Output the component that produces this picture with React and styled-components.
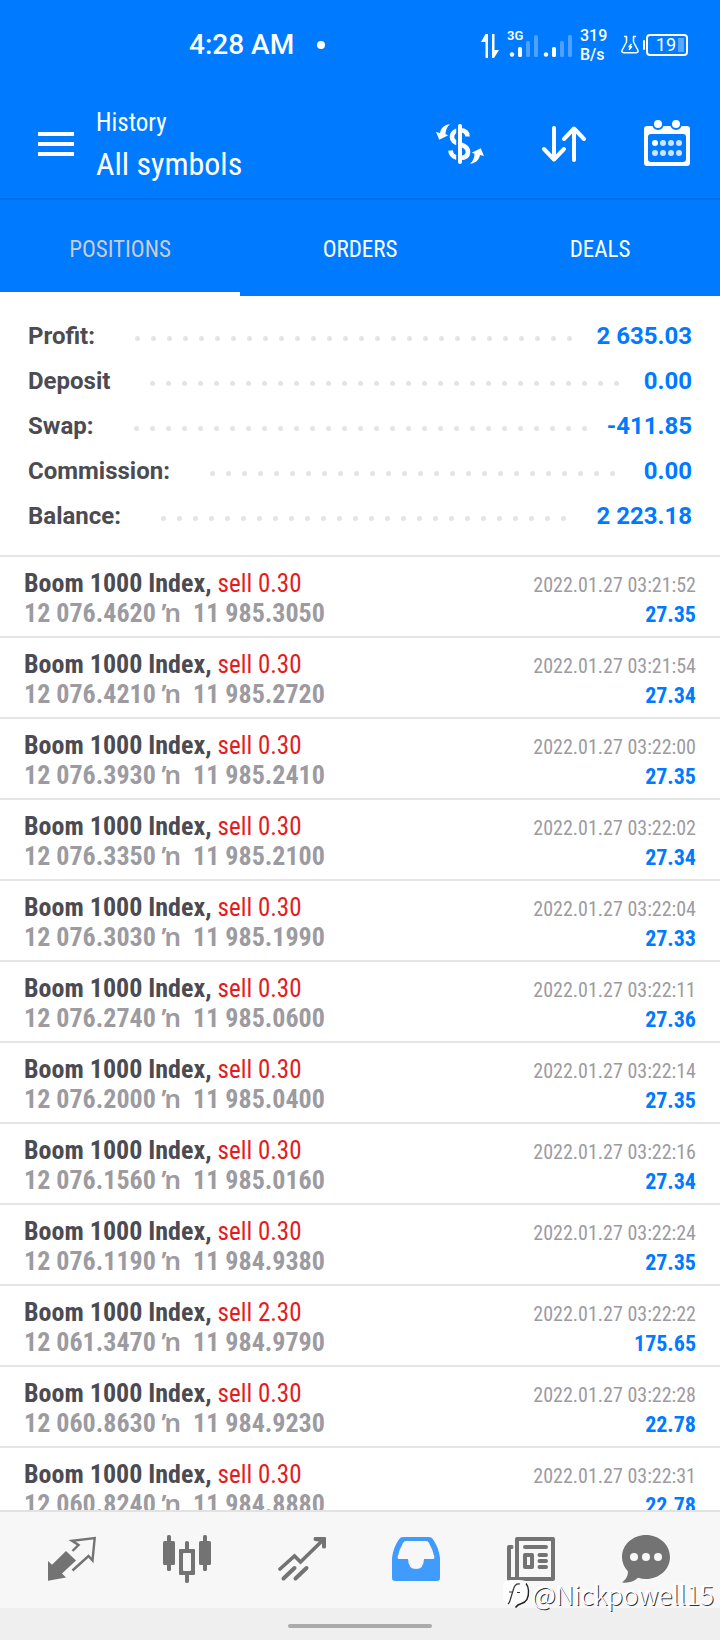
import React from "react";
import styled, { createGlobalStyle } from "styled-components";

const BLUE = "#007aff";
const CONDENSED = '"Roboto Condensed", "Liberation Sans Narrow", Roboto, sans-serif';

const GlobalStyle = createGlobalStyle`
  *, *::before, *::after { box-sizing: border-box; }
  body { margin: 0; background: #fff; font-family: Roboto, sans-serif; }
  button { margin: 0; padding: 0; border: 0; background: none; color: inherit; font: inherit; cursor: pointer; }
  svg { display: block; }
`;

const Screen = styled.div`
  position: relative;
  display: flex;
  flex-direction: column;
  height: 100vh;
  overflow: hidden;
`;

const StatusBar = styled.div`
  display: flex;
  align-items: center;
  justify-content: space-between;
  height: 90px;
  padding: 0 32px 0 189px;
  background: ${BLUE};
  color: #fff;
`;

const Clock = styled.time`
  display: flex;
  align-items: center;
  gap: 23px;
  font-size: 28px;
  font-weight: 500;
  line-height: 32px;

  &::after {
    content: "";
    width: 8px;
    height: 8px;
    border-radius: 50%;
    background: #fff;
  }
`;

const StatusIcons = styled.div`
  display: flex;
  align-items: center;
`;

const NetSpeed = styled.div`
  width: 41px;
  margin-left: 6px;
  font-size: 16px;
  font-weight: 500;
  line-height: 19px;
`;

const Battery = styled.div`
  position: relative;
  display: flex;
  align-items: center;
  justify-content: flex-end;
  gap: 2px;
  width: 42px;
  height: 22px;
  margin-left: 7px;
  padding-right: 2px;
  border: 2px solid #fff;
  border-radius: 4px;
  font-size: 18px;
  line-height: 18px;

  &::before {
    content: "";
    position: absolute;
    left: -5px;
    width: 2px;
    height: 10px;
    border-radius: 2px;
    background: #fff;
  }

  &::after {
    content: "";
    width: 6px;
    height: 14px;
    background: rgba(255, 255, 255, 0.35);
  }
`;

const Header = styled.header`
  display: flex;
  align-items: center;
  height: 110px;
  border-bottom: 2px solid #006ee6;
  background: ${BLUE};
  color: #fff;
  font-family: ${CONDENSED};
`;

const MenuButton = styled.button`
  display: flex;
  align-items: center;
  width: 96px;
  height: 96px;
  padding-left: 38px;
`;

const Titles = styled.div`
  flex: 1;
`;

const Kicker = styled.div`
  font-size: 25px;
  line-height: 40px;
`;

const Title = styled.h1`
  margin: 0;
  font-size: 32px;
  font-weight: 400;
  line-height: 42px;
`;

const ToolButton = styled.button`
  display: flex;
  align-items: center;
  justify-content: center;
  width: 104px;
  height: 96px;
`;

const Tabs = styled.div`
  display: flex;
  background: ${BLUE};
  font-family: ${CONDENSED};
`;

const Tab = styled.button`
  flex: 1;
  height: 96px;
  padding-top: 4px;
  border-top: 4px solid transparent;
  border-bottom: 4px solid ${({ $active }) => ($active ? "#fff" : "transparent")};
  color: ${({ $active }) => ($active ? "#ccc" : "#fff")};
  font-size: 23px;
  line-height: 28px;
`;

const Summary = styled.dl`
  margin: 0;
  padding: 17px 28px 17px;
  border-bottom: 2px solid #e5e5e5;
  font-size: 24px;
  font-weight: 700;
`;

const SummaryRow = styled.div`
  display: flex;
  align-items: center;
  height: 45px;
`;

const SummaryLabel = styled.dt`
  color: #4c4b52;
`;

const Leader = styled.div`
  display: flex;
  flex: 1;
  flex-wrap: wrap;
  gap: 11px;
  height: 5px;
  margin: 5px 16px 0 40px;
  overflow: hidden;
`;

const LeaderDot = styled.i`
  width: 5px;
  height: 5px;
  border-radius: 50%;
  background: #e4e4e4;
`;

const SummaryValue = styled.dd`
  margin: 0;
  color: ${BLUE};
`;

const DealList = styled.ul`
  flex: 1;
  min-height: 0;
  margin: 0;
  padding: 0;
  overflow: hidden;
  list-style: none;
  font-family: ${CONDENSED};
`;

const DealRow = styled.li`
  display: flex;
  justify-content: space-between;
  height: 81px;
  padding: 11px 24px 0;
  border-bottom: 2px solid #e5e5e5;
  line-height: 30px;
`;

const DealMain = styled.div`
  font-size: 26px;
  font-weight: 700;
  white-space: pre;
`;

const Symbol = styled.div`
  color: #4c4b52;
`;

const Side = styled.span`
  color: #e51b1e;
  font-size: 25px;
  font-weight: 400;
  line-height: 1;
`;

const Prices = styled.div`
  color: #9c9ba1;
`;

const Arrow = styled.span`
  font-family: "Noto Sans", sans-serif;
  font-weight: 600;
  line-height: 1;
`;

const DealMeta = styled.div`
  padding-top: 2px;
  font-size: 22px;
  text-align: right;
`;

const DealTime = styled.time`
  display: block;
  color: #9c9ba1;
  font-size: 20px;
`;

const Profit = styled.div`
  color: ${BLUE};
  font-weight: 700;
`;

const BottomNav = styled.nav`
  display: flex;
  height: 98px;
  padding: 0 17px 2px 15px;
  border-top: 2px solid #e2e2e2;
  background: #f7f7f7;
`;

const NavButton = styled.button`
  display: flex;
  flex: 1;
  align-items: center;
  justify-content: center;
  color: ${({ $active }) => ($active ? "#409bff" : "#737373")};
`;

const GestureBar = styled.div`
  display: flex;
  align-items: center;
  justify-content: center;
  height: 32px;
  padding-top: 4px;
  background: #efefef;

  &::after {
    content: "";
    width: 20%;
    height: 4px;
    border-radius: 2px;
    background: #aaa;
  }
`;

const Watermark = styled.div`
  position: absolute;
  right: 6px;
  bottom: 28px;
  display: flex;
  align-items: center;
  gap: 2px;
  color: #fff;
  font-family: "Noto Sans CJK SC", "Noto Sans", sans-serif;
  font-size: 26px;
  font-weight: 300;
  line-height: 36px;
  text-shadow: 1px 1px 0 #333, -1px -1px 0 #fff;
  pointer-events: none;
`;

const SignalIcons = () => (
  <svg width="94" height="34" viewBox="481 27 94 34" fill="#fff" aria-hidden="true">
    <path d="M486.500 33h2.500v24h-2.500V41H482zM493 33h2.500v16h4.500l-5 8h-2z" />
    <text x="508" y="39" fontFamily="Roboto, sans-serif" fontSize="13" fontWeight="600">3G</text>
    {[511, 545].map((x) => (
      <g key={x}>
        <circle cx={x + 2} cy="53.500" r="2.200" />
        <rect x={x + 8} y="46" width="4" height="10" rx="1.500" />
        <rect x={x + 16} y="40" width="4" height="16" rx="1.500" opacity=".3" />
        <rect x={x + 24} y="34" width="4" height="22" rx="1.500" opacity=".3" />
      </g>
    ))}
  </svg>
);

const FlaskIcon = () => (
  <svg width="18" height="20" viewBox="0 0 18 20" fill="none" stroke="#fff" strokeWidth="1.500" strokeLinejoin="round" aria-hidden="true">
    <path d="M3 1.500h2.500v5.500L1.200 15q-1 2.500 1.500 2.800h12.600q2.500-.3 1.500-2.800L12.500 7V1.500H15" />
    <path d="M10.500 9 8 11.800h2.500L8 14.800" />
  </svg>
);

const MenuIcon = () => (
  <svg width="36" height="24" viewBox="0 0 36 24" fill="#fff" aria-hidden="true">
    <path d="M0 0h36v4H0zM0 10h36v4H0zM0 20h36v4H0z" />
  </svg>
);

const swapArrow = "M14 4.300C8 4.800 5 8 4 13L0 12l3.300 7.700 9-4.400-2.800-1C9.500 10 11 7 14 4.300z";

const CurrencyIcon = () => (
  <svg width="48" height="48" viewBox="0 0 48 48" aria-hidden="true">
    <path d="M31.500 16.500C31.500 12 28.500 10.300 24 10.300S16 13 16 17s3 5.800 8 7.200 8 3.300 8 7.800-3.500 6-8 6-9-2-9.500-7.500" fill="none" stroke="#fff" strokeWidth="4.600" />
    <path d="M20.200 6h2v37h-2z" fill={BLUE} />
    <rect x="22" y="4" width="4" height="40" rx="2" fill="#fff" />
    <path d={swapArrow} fill="#fff" />
    <path d={swapArrow} fill="#fff" transform="rotate(180 24 24)" />
  </svg>
);

const SortIcon = () => (
  <svg width="48" height="48" viewBox="0 0 48 48" fill="none" stroke="#fff" strokeWidth="4" strokeLinecap="round" strokeLinejoin="round" aria-hidden="true">
    <path d="M14 8v31M4 29l10 10.500L24 29M34 40V9M24 19 34 8.500 44 19" />
  </svg>
);

const CalendarIcon = () => (
  <svg width="48" height="48" viewBox="0 0 48 48" aria-hidden="true">
    <path fillRule="evenodd" d="M3 6h40q3 0 3 3v34q0 3-3 3H3q-3 0-3-3V9q0-3 3-3zm4 8q-3 0-3 3v22q0 3 3 3h32q3 0 3-3V17q0-3-3-3z" fill="#fff" />
    {[14, 32].map((x) => (
      <circle key={x} cx={x} cy="4" r="5" fill="#fff" stroke={BLUE} strokeWidth="2" />
    ))}
    {[23, 33].map((y) =>
      [11, 19, 27, 35].map((x) => (
        <circle key={`${x}-${y}`} cx={x} cy={y} r="3" fill={x === 11 && y === 23 ? "#fff" : "#cce4ff"} />
      ))
    )}
  </svg>
);

const QuotesIcon = () => (
  <svg width="48" height="48" viewBox="0 0 48 48" aria-hidden="true">
    <path d="M0 26l4 3.700L18 16l10 9.500L14 38.500l4 4L0 45.700z" fill="currentColor" />
    <path d="M24.500 16l6-6L24 5.800 46.700 3l-2.200 22.500-4-4.500-16 14.500" fill="none" stroke="currentColor" strokeWidth="2.400" />
  </svg>
);

const ChartIcon = () => (
  <svg width="48" height="48" viewBox="0 0 48 48" fill="currentColor" aria-hidden="true">
    {[0, 36].map((x) => (
      <g key={x}>
        <rect x={x} y="6" width="12" height="24" rx="1.500" />
        <rect x={x + 4} y="0" width="4" height="36" rx="1.500" />
      </g>
    ))}
    <path fillRule="evenodd" d="M17 14h5V7.500q0-1.500 2-1.500t2 1.500V14h5q1 0 1 1v24q0 1-1 1h-5v6.500q0 1.500-2 1.500t-2-1.500V40h-5q-1 0-1-1V15q0-1 1-1zm4 4q-1 0-1 1v16q0 1 1 1h6q1 0 1-1V19q0-1-1-1z" />
  </svg>
);

const TradeIcon = () => (
  <svg width="48" height="48" viewBox="0 0 48 48" fill="none" stroke="currentColor" strokeWidth="4" strokeLinecap="round" aria-hidden="true">
    <path d="M2 34 16.500 21l6 6L45 5" strokeWidth="3.600" />
    <path d="M5.500 43.500 16.500 33M17.500 43.500 28.500 33" />
    <path d="M37 2h10q1 0 1 1v9q0 1.500-2 1.500t-2-1.500V7l-7-1q-1.500 0-1.500-2T37 2z" fill="currentColor" stroke="none" />
  </svg>
);

const HistoryIcon = () => (
  <svg width="48" height="48" viewBox="0 0 48 48" fill="currentColor" aria-hidden="true">
    <path fillRule="evenodd" d="M11 2h26q2.500 0 3.800 2Q47 13 48 23v20q0 3-3 3H3q-3 0-3-3V23Q1 13 7.200 4 8.500 2 11 2zm3 4q-2 0-3 2Q7 15 5.600 22q-.3 2 1.400 2h9q.3 10 8 10t8-10h9q1.700 0 1.400-2Q41 15 37 8q-1-2-3-2z" />
  </svg>
);

const NewsIcon = () => (
  <svg width="48" height="48" viewBox="0 0 48 48" fill="currentColor" aria-hidden="true">
    <path fillRule="evenodd" d="M10 2h36q2 0 2 2v40q0 2-2 2H2q-2 0-2-2V12q0-2 2-2h3q1.500 0 1.500 2T5 14H4v28h4V4q0-2 2-2zm2 4v36h32V6z" />
    <path fillRule="evenodd" d="M18 18h7q2 0 2 2v12q0 2-2 2h-7q-2 0-2-2V20q0-2 2-2zm2 4v8h3v-8z" />
    <path d="M18 12h21M32.500 20H39M32.500 26H39M32.500 32H39" stroke="currentColor" strokeWidth="4" strokeLinecap="round" />
  </svg>
);

const ChatIcon = () => (
  <svg width="48" height="48" viewBox="0 0 48 48" aria-hidden="true">
    <path d="M24 0C11 0 0 9.500 0 22q0 8 6 14.500Q6 43 0 47.500q10 1 16-4.700 4 1.200 8 1.200c13 0 24-9.500 24-22S37 0 24 0z" fill="currentColor" />
    {[12, 24, 36].map((x) => (
      <circle key={x} cx={x} cy="22" r="4" fill="#f7f7f7" />
    ))}
  </svg>
);

const BrandIcon = () => (
  <svg width="28" height="30" viewBox="0 0 28 30" fill="none" aria-hidden="true">
    <path d="M9 1h9q9 0 9 9v7q0 7-7 8l-6 4-1-4H9q-8 0-8-8v-8q0-8 8-8z" fill="#fff" />
    <path d="M24 4.500q2.500 3 2.500 7 .5 11-7 13-4 1-6 4" stroke="#222" strokeWidth="1.400" />
    <path d="M18 5q-5-1-6.500 5L8.500 20q-1 4-2.500 5M7 13h3.500M15 13.500h3" stroke="#333" strokeWidth="1.200" />
  </svg>
);

const summary = [
  ["Profit:", "2 635.03"],
  ["Deposit", "0.00"],
  ["Swap:", "-411.85"],
  ["Commission:", "0.00"],
  ["Balance:", "2 223.18"],
];

const deals = [
  ["0.30", "12 076.4620", "11 985.3050", "03:21:52", "27.35"],
  ["0.30", "12 076.4210", "11 985.2720", "03:21:54", "27.34"],
  ["0.30", "12 076.3930", "11 985.2410", "03:22:00", "27.35"],
  ["0.30", "12 076.3350", "11 985.2100", "03:22:02", "27.34"],
  ["0.30", "12 076.3030", "11 985.1990", "03:22:04", "27.33"],
  ["0.30", "12 076.2740", "11 985.0600", "03:22:11", "27.36"],
  ["0.30", "12 076.2000", "11 985.0400", "03:22:14", "27.35"],
  ["0.30", "12 076.1560", "11 985.0160", "03:22:16", "27.34"],
  ["0.30", "12 076.1190", "11 984.9380", "03:22:24", "27.35"],
  ["2.30", "12 061.3470", "11 984.9790", "03:22:22", "175.65"],
  ["0.30", "12 060.8630", "11 984.9230", "03:22:28", "22.78"],
  ["0.30", "12 060.8240", "11 984.8880", "03:22:31", "22.78"],
];

const navItems = [
  ["Quotes", QuotesIcon],
  ["Chart", ChartIcon],
  ["Trade", TradeIcon],
  ["History", HistoryIcon],
  ["News", NewsIcon],
  ["Messages", ChatIcon],
];

const leaderDots = Array.from({ length: 80 }, (_, i) => <LeaderDot key={i} />);

export default function App() {
  return (
    <>
      <GlobalStyle />
      <Screen>
        <StatusBar>
          <Clock>4:28 AM</Clock>
          <StatusIcons>
            <SignalIcons />
            <NetSpeed>319<br />B/s</NetSpeed>
            <FlaskIcon />
            <Battery>19</Battery>
          </StatusIcons>
        </StatusBar>

        <Header>
          <MenuButton aria-label="Menu"><MenuIcon /></MenuButton>
          <Titles>
            <Kicker>History</Kicker>
            <Title>All symbols</Title>
          </Titles>
          <ToolButton aria-label="Currency"><CurrencyIcon /></ToolButton>
          <ToolButton aria-label="Sort"><SortIcon /></ToolButton>
          <ToolButton aria-label="Period"><CalendarIcon /></ToolButton>
        </Header>

        <Tabs role="tablist">
          <Tab role="tab" aria-selected="true" $active>POSITIONS</Tab>
          <Tab role="tab" aria-selected="false">ORDERS</Tab>
          <Tab role="tab" aria-selected="false">DEALS</Tab>
        </Tabs>

        <Summary>
          {summary.map(([label, value]) => (
            <SummaryRow key={label}>
              <SummaryLabel>{label}</SummaryLabel>
              <Leader aria-hidden="true">{leaderDots}</Leader>
              <SummaryValue>{value}</SummaryValue>
            </SummaryRow>
          ))}
        </Summary>

        <DealList>
          {deals.map(([volume, open, close, time, profit]) => (
            <DealRow key={time}>
              <DealMain>
                <Symbol>Boom 1000 Index, <Side>sell {volume}</Side></Symbol>
                <Prices>{open} <Arrow>ŉ</Arrow>{"  "}{close}</Prices>
              </DealMain>
              <DealMeta>
                <DealTime>2022.01.27 {time}</DealTime>
                <Profit>{profit}</Profit>
              </DealMeta>
            </DealRow>
          ))}
        </DealList>

        <BottomNav>
          {navItems.map(([label, Icon]) => (
            <NavButton key={label} aria-label={label} $active={label === "History"}>
              <Icon />
            </NavButton>
          ))}
        </BottomNav>
        <GestureBar />
        <Watermark><BrandIcon />@Nickpowell15</Watermark>
      </Screen>
    </>
  );
}
